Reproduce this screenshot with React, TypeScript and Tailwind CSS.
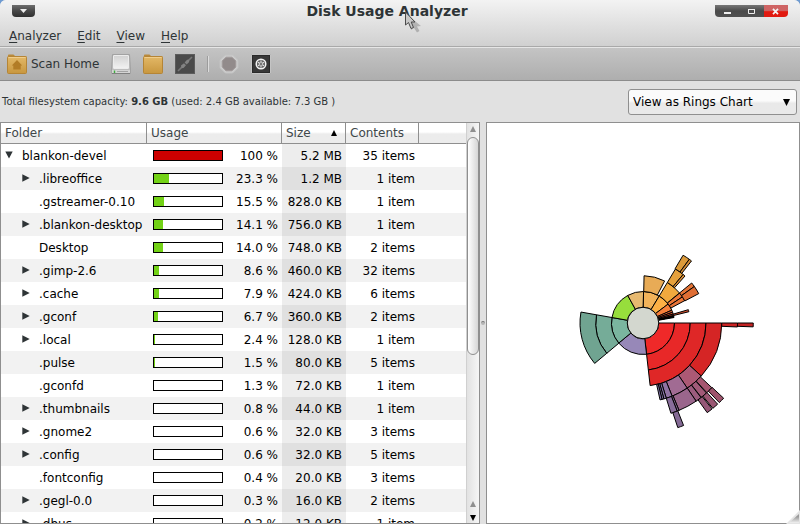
import React from "react";

type Row = {
  name: string;
  level: number;
  expander: "open" | "closed" | "none";
  percent: number;
  label: string;
  size: string;
  contents: string;
};

const rows: Row[] = [
  { name: "blankon-devel", level: 0, expander: "open", percent: 100, label: "100 %", size: "5.2 MB", contents: "35 items" },
  { name: ".libreoffice", level: 1, expander: "closed", percent: 23.3, label: "23.3 %", size: "1.2 MB", contents: "1 item" },
  { name: ".gstreamer-0.10", level: 1, expander: "none", percent: 15.5, label: "15.5 %", size: "828.0 KB", contents: "1 item" },
  { name: ".blankon-desktop", level: 1, expander: "closed", percent: 14.1, label: "14.1 %", size: "756.0 KB", contents: "1 item" },
  { name: "Desktop", level: 1, expander: "none", percent: 14.0, label: "14.0 %", size: "748.0 KB", contents: "2 items" },
  { name: ".gimp-2.6", level: 1, expander: "closed", percent: 8.6, label: "8.6 %", size: "460.0 KB", contents: "32 items" },
  { name: ".cache", level: 1, expander: "closed", percent: 7.9, label: "7.9 %", size: "424.0 KB", contents: "6 items" },
  { name: ".gconf", level: 1, expander: "closed", percent: 6.7, label: "6.7 %", size: "360.0 KB", contents: "2 items" },
  { name: ".local", level: 1, expander: "closed", percent: 2.4, label: "2.4 %", size: "128.0 KB", contents: "1 item" },
  { name: ".pulse", level: 1, expander: "none", percent: 1.5, label: "1.5 %", size: "80.0 KB", contents: "5 items" },
  { name: ".gconfd", level: 1, expander: "none", percent: 1.3, label: "1.3 %", size: "72.0 KB", contents: "1 item" },
  { name: ".thumbnails", level: 1, expander: "closed", percent: 0.8, label: "0.8 %", size: "44.0 KB", contents: "1 item" },
  { name: ".gnome2", level: 1, expander: "closed", percent: 0.6, label: "0.6 %", size: "32.0 KB", contents: "3 items" },
  { name: ".config", level: 1, expander: "closed", percent: 0.6, label: "0.6 %", size: "32.0 KB", contents: "5 items" },
  { name: ".fontconfig", level: 1, expander: "none", percent: 0.4, label: "0.4 %", size: "20.0 KB", contents: "3 items" },
  { name: ".gegl-0.0", level: 1, expander: "closed", percent: 0.3, label: "0.3 %", size: "16.0 KB", contents: "2 items" },
  { name: ".dbus", level: 1, expander: "closed", percent: 0.2, label: "0.2 %", size: "12.0 KB", contents: "1 item" },
];

// [ring, start angle, end angle, colour]; angles run clockwise from east
type Segment = [number, number, number, string];

const segments: Segment[] = [
  [1, 0, 83.5, "#ef2929"],
  [2, 0, 83.5, "#e82828"],
  [3, 0, 83.5, "#df2727"],
  [4, 0, 42.3, "#d52525"],
  [5, 0, 2.4, "#cc2424"],
  [6, 0, 2, "#c32323"],
  [4, 42.3, 55.8, "#ac5975"],
  [4, 55.8, 68.3, "#a16b93"],
  [4, 68.3, 72.8, "#8f72a2"],
  [4, 72.8, 74.6, "#8673a6"],
  [4, 74.6, 76, "#8574a8"],
  [4, 76, 77.5, "#8274aa"],
  [5, 43.2, 47.5, "#a65670"],
  [5, 47.8, 51.9, "#a15a78"],
  [5, 52.1, 55.8, "#9c5c7e"],
  [5, 55.8, 67.6, "#9a668c"],
  [5, 67.6, 68.8, "#8a6c98"],
  [5, 68.8, 72.8, "#886d9b"],
  [6, 43, 46.2, "#9e536c"],
  [6, 47.4, 50.7, "#9a5672"],
  [6, 51.2, 54.4, "#955878"],
  [6, 68.4, 71.6, "#846a95"],
  [1, 83.5, 140.4, "#9788b8"],
  [1, 140.4, 190, "#7ab59f"],
  [2, 140.1, 190, "#75ac98"],
  [3, 140.1, 190, "#70a491"],
  [1, 190, 241, "#97de3c"],
  [1, 241, 271, "#e7b970"],
  [1, 271, 301, "#f2b35a"],
  [2, 271.3, 297.2, "#e8ab56"],
  [1, 301, 323, "#fcb045"],
  [2, 301, 320.5, "#f1a93e"],
  [3, 301, 309.6, "#e6a13c"],
  [3, 309.6, 311.8, "#dd8f36"],
  [4, 300.6, 306, "#dc9a39"],
  [4, 306, 308, "#d38b36"],
  [1, 323, 336, "#f57f3a"],
  [2, 320.8, 326.5, "#ee7837"],
  [2, 326.5, 331.8, "#ea7436"],
  [3, 320.6, 324.6, "#e37436"],
  [3, 324.6, 332.2, "#df6e34"],
  [1, 336, 340, "#e56234"],
  [1, 340, 343.5, "#dc5530"],
  [1, 343.5, 346.3, "#d34a2c"],
  [1, 346.3, 347.6, "#8c2a1c"],
  [1, 347.6, 348.6, "#521712"],
  [1, 348.6, 350, "#2a0c0a"],
  [2, 343.6, 346.2, "#d3502f"],
];

const RING = 15.75;

function arcPath(ring: number, from: number, to: number) {
  const inner = ring * RING;
  const outer = inner + RING;
  const at = (r: number, deg: number) => {
    const a = (deg * Math.PI) / 180;
    return `${(r * Math.cos(a)).toFixed(2)} ${(r * Math.sin(a)).toFixed(2)}`;
  };
  return `M${at(inner, from)}L${at(outer, from)}A${outer} ${outer} 0 0 1 ${at(outer, to)}L${at(inner, to)}A${inner} ${inner} 0 0 0 ${at(inner, from)}Z`;
}

function RingsChart() {
  return (
    <svg width="240" height="240" viewBox="-120 -120 240 240" role="img" aria-label="Rings chart" className="shrink-0">
      {segments.map(([ring, from, to, fill], i) => (
        <path key={i} d={arcPath(ring, from, to)} fill={fill} stroke="#000" strokeWidth="1" />
      ))}
      <circle r={RING} fill="#d3d7cf" stroke="#000" strokeWidth="1" />
    </svg>
  );
}

function FolderIcon({ home = false }: { home?: boolean }) {
  return (
    <svg width="20" height="20" viewBox="0 0 20 20">
      <defs>
        <linearGradient id="folderFill" x1="0" y1="0" x2="0" y2="1">
          <stop offset="0" stopColor="#e3b867" />
          <stop offset="1" stopColor="#c8973f" />
        </linearGradient>
      </defs>
      <path d="M1 2.5V1.2Q1 0.5 1.8 0.5H6.5L8 2H18.5Q19.5 2 19.5 3V5H1Z" fill="#b98a3c" />
      <rect x="0.5" y="2.5" width="19" height="17" rx="1" fill="url(#folderFill)" stroke="#b58536" />
      <path d="M1.5 3.5H18.5" stroke="#f0cd8b" />
      {home && <path d="M10 6L4.8 11.4H6.3V15.5H13.7V11.4H15.2Z" fill="#b27c26" />}
    </svg>
  );
}

function DriveIcon() {
  return (
    <svg width="20" height="20" viewBox="0 0 20 20">
      <defs>
        <linearGradient id="driveFill" x1="0" y1="0" x2="0" y2="1">
          <stop offset="0" stopColor="#d2d2d2" />
          <stop offset="1" stopColor="#f2f2f2" />
        </linearGradient>
      </defs>
      <path d="M1.5 0.5H18.5L19.5 15V19.5H0.5V15Z" fill="#bdbdbd" stroke="#a2a2a2" />
      <rect x="2.5" y="1.5" width="15" height="13" rx="0.5" fill="url(#driveFill)" stroke="#ececec" />
      <path d="M1 16H19V19H1Z" fill="#d4d4d4" />
      <path d="M1 19.5H19" stroke="#808080" />
      <path d="M3.5 16.5V19" stroke="#3fae3f" strokeWidth="1.4" />
      <path d="M6 17.5H17" stroke="#a4a4a4" />
    </svg>
  );
}

function NetworkIcon() {
  return (
    <svg width="20" height="20" viewBox="0 0 20 20">
      <rect x="0.5" y="0.5" width="19" height="19" fill="#4a4a4a" stroke="#5c5c5c" />
      <path d="M3 17L7.5 12.5M12.5 7.5L17 3" stroke="#777" strokeWidth="1.6" />
      <path d="M6 11.5L9 9.2L11 11.2L8.5 14L6.5 14.2Z" fill="#838383" />
      <path d="M9.6 8.6L12 5.8L14 5.8L14.2 8L11.6 10.6Z" fill="#838383" />
    </svg>
  );
}

function StopIcon() {
  return (
    <svg width="20" height="20" viewBox="0 0 20 20">
      <path d="M6.3 1H13.7L19 6.3V13.7L13.7 19H6.3L1 13.7V6.3Z" fill="#cdcdcd" stroke="#c2c2c2" />
      <path d="M7 3.2H13L16.8 7V13L13 16.8H7L3.2 13V7Z" fill="#928b8b" stroke="#a19b9b" />
    </svg>
  );
}

function RefreshIcon() {
  return (
    <svg width="20" height="20" viewBox="0 0 20 20">
      <rect x="0.5" y="0.5" width="19" height="19" rx="0.5" fill="#363636" stroke="#c4c4c4" />
      <rect x="1.5" y="1.5" width="17" height="17" fill="#383838" stroke="#2a2a2a" />
      <circle cx="10" cy="10" r="4.8" fill="#666" stroke="#f3f3f3" strokeWidth="1.5" />
      <path d="M10 6.5V13.5M7 8.2L13 11.8M7 11.8L13 8.2" stroke="#e4e4e4" strokeWidth="1.1" />
      <circle cx="10" cy="10" r="1" fill="#555" />
    </svg>
  );
}

function Expander({ kind }: { kind: Row["expander"] }) {
  if (kind === "none") return <span className="w-2" />;
  return (
    <button type="button" aria-label={kind === "open" ? "Collapse" : "Expand"} className="w-2 pb-[2px]">
      <svg width="8" height="8" viewBox="0 0 8 8" className="block">
        <path d={kind === "open" ? "M0.3 0.5H7.7L4 7.5Z" : "M0.3 0.3V7.7L7.7 4Z"} fill="#2e3436" />
      </svg>
    </button>
  );
}

const menus = [
  ["A", "nalyzer"],
  ["E", "dit"],
  ["V", "iew"],
  ["H", "elp"],
];

function TitleBar() {
  return (
    <header className="flex h-6 items-start pr-3 pl-3">
      <button
        type="button"
        aria-label="Window menu"
        className="mt-[5px] flex h-3 w-[23px] items-center justify-center rounded-b bg-linear-to-b from-[#6d6d6d] via-[#484848] to-[#303030]"
      >
        <svg width="7" height="4" viewBox="0 0 7 4">
          <path d="M0 0H7L3.5 4Z" fill="#eee" />
        </svg>
      </button>
      <h1 className="flex-1 pl-6 text-center text-[14px] leading-[22px] font-bold text-[#2e3436]">Disk Usage Analyzer</h1>
      <div className="mt-[5px] flex h-3 w-[73px] overflow-hidden rounded-b">
        <button type="button" aria-label="Minimize" className="flex flex-1 items-center justify-center bg-linear-to-b from-[#777] via-[#4a4a4a] to-[#505050]">
          <svg width="7" height="6" viewBox="0 0 7 6">
            <path d="M0 5H7" stroke="#eee" strokeWidth="2" />
          </svg>
        </button>
        <button type="button" aria-label="Maximize" className="flex flex-1 items-center justify-center bg-linear-to-b from-[#777] via-[#4a4a4a] to-[#505050]">
          <svg width="7" height="6" viewBox="0 0 7 6">
            <path d="M0.5 1V5.5H6.5V1M0 1.5H7" fill="none" stroke="#eee" />
          </svg>
        </button>
        <button type="button" aria-label="Close" className="flex flex-1 items-center justify-center bg-linear-to-b from-[#cf6565] from-45% to-[#e11a10] to-55%">
          <svg width="7" height="7" viewBox="0 0 7 7">
            <path d="M1 0.8L6 6.2M6 0.8L1 6.2" stroke="#f4f4f4" strokeWidth="1.7" />
          </svg>
        </button>
      </div>
    </header>
  );
}

function Toolbar() {
  return (
    <div role="toolbar" className="flex h-[34px] items-center border-t border-b border-t-[#e6e6e6] border-b-[#8c8c8c] bg-linear-to-b from-[#c4c4c4] to-[#aeaeae] pl-[7px]">
      <button type="button" className="flex items-center gap-1">
        <FolderIcon home />
        <span>Scan Home</span>
      </button>
      <div className="ml-3 flex items-center gap-3">
        <button type="button" aria-label="Scan Filesystem"><DriveIcon /></button>
        <button type="button" aria-label="Scan Folder"><FolderIcon /></button>
        <button type="button" aria-label="Scan Remote Folder"><NetworkIcon /></button>
        <span className="h-4 border-r border-l border-r-[#dcdcdc] border-l-[#9c9c9c]" />
        <div className="-ml-[2px] flex gap-3">
          <button type="button" aria-label="Stop"><StopIcon /></button>
          <button type="button" aria-label="Refresh"><RefreshIcon /></button>
        </div>
      </div>
    </div>
  );
}

const headerCell =
  "h-[21px] border-r border-b border-r-[#8f8f8f] border-b-[#8f8f8f] bg-linear-to-b from-white from-45% to-[#ececec] to-55% p-0 px-1 text-left font-normal text-[#40474a]";

function FolderTable() {
  return (
    <div className="min-w-0 flex-1 overflow-hidden">
      <table className="w-full table-fixed border-separate border-spacing-0 whitespace-nowrap">
        <colgroup>
          <col className="w-[146px]" />
          <col className="w-[135px]" />
          <col className="w-[64px]" />
          <col className="w-[73px]" />
          <col />
        </colgroup>
        <thead>
          <tr>
            <th className={headerCell}>Folder</th>
            <th className={headerCell}>Usage</th>
            <th className={headerCell}>
              <span className="flex items-center justify-between pr-1">
                Size
                <svg width="6" height="6" viewBox="0 0 6 6">
                  <path d="M3 0L6 6H0Z" fill="#000" />
                </svg>
              </span>
            </th>
            <th className={headerCell}>Contents</th>
            <th aria-label="Spare" className="h-[21px] border-b border-[#8f8f8f] bg-linear-to-b from-white from-45% to-[#ececec] to-55% p-0" />
          </tr>
        </thead>
        <tbody>
          {rows.map((row, i) => (
            <tr key={row.name} className={i % 2 ? "bg-[#f2f2f2]" : "bg-white"}>
              <td className="h-[23px] p-0">
                <span className={row.level ? "flex items-center gap-[9px] pl-[21px]" : "flex items-center gap-[9px] pl-1"}>
                  <Expander kind={row.expander} />
                  {row.name}
                </span>
              </td>
              <td className="p-0">
                <span className="flex items-center justify-between pr-1 pl-[6px]">
                  <span className="block h-[11px] w-[70px] border border-black bg-white">
                    <span
                      className={row.percent === 100 ? "block h-full bg-[#cc0000]" : "block h-full bg-[#73d216]"}
                      style={{ width: Math.floor((68 * row.percent) / 100) }}
                    />
                  </span>
                  {row.label}
                </span>
              </td>
              <td className={i % 2 ? "bg-[#e0e0e0] p-0 pr-1 text-right" : "bg-[#ededed] p-0 pr-1 text-right"}>{row.size}</td>
              <td className="p-0 pr-1 text-right">{row.contents}</td>
              <td className="p-0" />
            </tr>
          ))}
        </tbody>
      </table>
    </div>
  );
}

function Scrollbar() {
  return (
    <div aria-hidden="true" className="flex w-[13px] shrink-0 flex-col items-center border-l border-[#d0d0d0] bg-linear-to-r from-[#e2e2e2] to-[#f6f6f6]">
      <svg width="6" height="14" viewBox="0 0 6 14">
        <path d="M3 3L6 9H0Z" fill="#8f8f8f" />
      </svg>
      <div className="h-[218px] w-full rounded-full border border-[#8f8f8f] bg-linear-to-r from-white to-[#d6d6d6]" />
      <div className="flex-1" />
      <svg width="6" height="22" viewBox="0 0 6 22">
        <path d="M3 0L6 6H0Z" fill="#8f8f8f" />
        <path d="M0 14H6L3 20Z" fill="#000" />
      </svg>
    </div>
  );
}

export default function App() {
  return (
    <div className="h-screen bg-[#6f9bd1]">
      <div className="relative flex h-full flex-col overflow-hidden rounded-t-md bg-[#e1e1e1] font-['DejaVu_Sans',sans-serif] text-[12px] leading-[16px] text-[#2e3436]">
        <div className="border-b border-[#a9a9a9] bg-linear-to-b from-[#f3f3f3] to-[#d0d0d0]">
          <TitleBar />
          <nav className="flex h-[22px] items-start gap-4 pt-1 pl-[9px]">
            {menus.map(([key, rest]) => (
              <button key={key} type="button">
                <u className="underline-offset-2">{key}</u>
                {rest}
              </button>
            ))}
          </nav>
        </div>
        <Toolbar />
        <div className="flex h-[41px] shrink-0 items-center justify-between pr-[3px] pl-[2px]">
          <p className="text-[10px]">
            Total filesystem capacity: <b>9.6 GB</b> (used: 2.4 GB available: 7.3 GB )
          </p>
          <div className="relative">
            <select
              aria-label="View as"
              className="h-[26px] w-[169px] appearance-none rounded-[3px] border border-[#8f8f8f] bg-linear-to-b from-[#fbfbfb] from-45% to-[#e9e9e9] to-55% pl-1 text-black"
            >
              <option>View as Rings Chart</option>
              <option>View as Treemap Chart</option>
            </select>
            <svg width="7" height="7" viewBox="0 0 7 7" className="pointer-events-none absolute top-[10px] right-[7px]">
              <path d="M0 0H7L3.5 7Z" fill="#000" />
            </svg>
          </div>
        </div>
        <main className="flex min-h-0 flex-1">
          <section aria-label="Folders" className="flex w-3/5 border border-[#8f8f8f] bg-white text-black">
            <FolderTable />
            <Scrollbar />
          </section>
          <div className="flex w-[6px] items-center justify-center">
            <span className="h-1 w-1 rounded-full border-t border-[#777] bg-[#b5b5b5]" />
          </div>
          <section aria-label="Chart" className="flex min-w-0 flex-1 items-center justify-center overflow-hidden border border-[#8f8f8f] bg-white">
            <RingsChart />
          </section>
        </main>
        <svg width="14" height="14" viewBox="0 0 14 14" className="absolute right-0 bottom-0">
          <defs>
            <linearGradient id="gripFill" x1="0" y1="0" x2="0" y2="1">
              <stop offset="0.3" stopColor="#9a9a9a" />
              <stop offset="1" stopColor="#f2f2f2" />
            </linearGradient>
          </defs>
          <path d="M14 0V14H0Z" fill="#e4e4e4" />
          <path d="M13 4V13H3Z" fill="url(#gripFill)" />
        </svg>
        <svg width="20" height="24" viewBox="0 0 20 24" className="absolute top-[11px] left-[404px]">
          <path d="M6 6L17 15L13 15.5L15.5 20L13 21.5L10 17L7 19Z" fill="#000" opacity="0.2" />
          <path d="M1.5 1V14L4.5 11.5L7 17.5L9.5 16.5L7.2 11H11Z" fill="#c8c8c8" stroke="#4a4a4a" />
        </svg>
      </div>
    </div>
  );
}
